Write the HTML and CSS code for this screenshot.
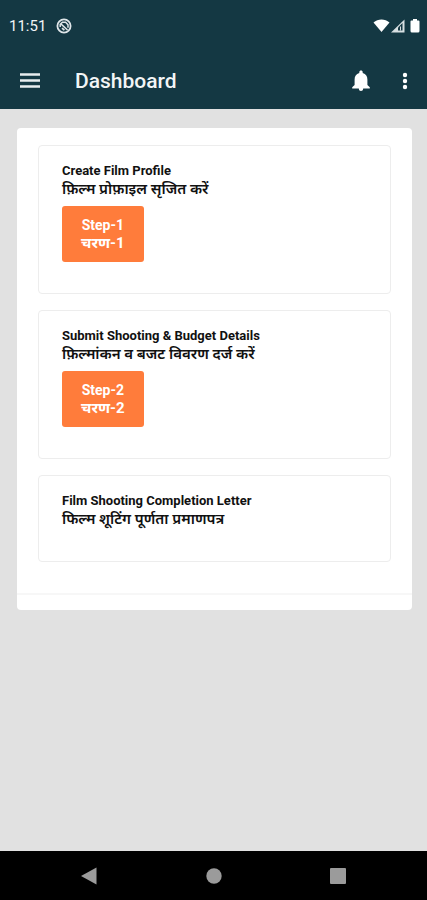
FILE: index.html
```html
<!DOCTYPE html>
<html lang="en">
<head>
<meta charset="utf-8">
<meta name="viewport" content="width=device-width, initial-scale=1">
<title>Dashboard</title>
<link rel="stylesheet" href="styles.css">
</head>
<body>
<header class="top">
  <div class="status">
    <span class="time">11:51</span>
    <svg class="notice" width="16" height="16" viewBox="0 0 16 16" aria-hidden="true">
      <circle cx="8" cy="8" r="6.6" fill="none" stroke="#dfe6e9" stroke-width="1.8"/>
      <path d="M4.2 9V6.4L6.4 4.3H9.6L12 6.8V9.7" fill="none" stroke="#dfe6e9" stroke-width="1.5"/>
      <path d="M5 6l6.5 6M6 10.2l2.4 2" stroke="#dfe6e9" stroke-width="1.7"/>
    </svg>
    <svg class="signals" width="48" height="16" viewBox="0 0 48 16" aria-hidden="true">
      <path d="M.5 4.500C5 .5 12 .5 16.500 4.500L8.500 14z" fill="#fff"/>
      <path d="M18 14.500L31.500 1.500V14.500z" fill="#d7dfe2"/>
      <path d="M25 12.500V9.500L29.500 5V12.500z" fill="#143843"/>
      <path d="M27.500 12.500V8.500" stroke="#d7dfe2" stroke-width="1"/>
      <path d="M40 1h4v1.500h1.500q1 0 1 1V13q0 1.500-1.500 1.500h-6q-1.500 0-1.500-1.500V3.500q0-1 1-1H40z" fill="#fff"/>
    </svg>
  </div>
  <div class="bar">
    <button class="icon" type="button" aria-label="Menu">
      <svg width="20" height="16" viewBox="0 0 20 16"><path d="M0 1.500h20M0 7.500h20M0 13.500h20" stroke="#e8edef" stroke-width="2.400"/></svg>
    </button>
    <h1>Dashboard</h1>
    <button class="icon" type="button" aria-label="Notifications">
      <svg width="18" height="22" viewBox="0 0 18 22"><path d="M9 .5c1 0 1.700.7 1.700 1.700v.7c3.300.8 4.700 3.400 4.700 6.600v5.500l2.400 2.300v1.200H.2v-1.200L2.600 15V9.500c0-3.200 1.400-5.800 4.700-6.600v-.7C7.300 1.200 8 .5 9 .5zM6.800 18.500h4.400C11 20.300 10.200 21 9 21s-2-.7-2.200-2.500z" fill="#fff"/></svg>
    </button>
    <button class="icon" type="button" aria-label="More options">
      <svg width="6" height="20" viewBox="0 0 6 20"><g fill="#fff"><circle cx="3" cy="4" r="2.200"/><circle cx="3" cy="10" r="2.200"/><circle cx="3" cy="16" r="2.200"/></g></svg>
    </button>
  </div>
</header>
<main>
  <div class="panel">
    <div class="cards">
      <section class="card">
        <h2>Create Film Profile</h2>
        <p lang="hi">फ़िल्म प्रोफ़ाइल सृजित करें</p>
        <button class="step" type="button">Step-1<span lang="hi">चरण-1</span></button>
      </section>
      <section class="card">
        <h2>Submit Shooting &amp; Budget Details</h2>
        <p lang="hi">फ़िल्मांकन व बजट विवरण दर्ज करें</p>
        <button class="step" type="button">Step-2<span lang="hi">चरण-2</span></button>
      </section>
      <section class="card">
        <h2>Film Shooting Completion Letter</h2>
        <p lang="hi">फिल्म शूटिंग पूर्णता प्रमाणपत्र</p>
      </section>
    </div>
    <div class="foot"></div>
  </div>
</main>
<nav class="system" aria-label="System">
  <button type="button" aria-label="Back"><svg width="16" height="18" viewBox="0 0 16 18"><path d="M0 9L15.500.5v17z" fill="#9b9b9b"/></svg></button>
  <button type="button" aria-label="Home"><svg width="16" height="16" viewBox="0 0 16 16"><circle cx="8" cy="8" r="7.700" fill="#9b9b9b"/></svg></button>
  <button type="button" aria-label="Recent apps"><svg width="16" height="16" viewBox="0 0 16 16"><rect width="16" height="16" rx="1" fill="#9b9b9b"/></svg></button>
</nav>
</body>
</html>
```
FILE: styles.css
```css
* { box-sizing: border-box; }
body {
  margin: 0;
  min-height: 100vh;
  display: flex;
  flex-direction: column;
  background: #e1e1e1;
  color: #111;
  font-family: Roboto, "Noto Sans", "Noto Sans Devanagari", sans-serif;
}
button {
  border: 0;
  padding: 0;
  background: none;
  font: inherit;
}
svg { display: block; }
.top { background: #143843; color: #f2f5f6; }
.status {
  display: flex;
  align-items: center;
  height: 52px;
  padding: 0 6px 0 9px;
}
.time { font-size: 15px; line-height: 20px; }
.notice { margin-left: 10px; }
.signals { margin-left: auto; }
.bar {
  display: flex;
  align-items: center;
  gap: 32px;
  height: 57px;
  padding: 0 19px 0 20px;
}
.bar h1 {
  flex: 1;
  margin: 0;
  padding-left: 3px;
  font-size: 21px;
  line-height: 28px;
  font-weight: 500;
}
.icon { flex: none; }
main { flex: 1; padding: 19px 15px 24px 17px; }
.panel { background: #fff; border-radius: 4px; }
.cards {
  display: flex;
  flex-direction: column;
  gap: 16px;
  padding: 17px 21px 31px;
}
.card {
  padding: 16px 23px 31px;
  border: 1px solid #ededed;
  border-radius: 4px;
}
.card:last-child { padding-bottom: 33px; }
.card h2 {
  margin: 0;
  font-size: 13px;
  line-height: 18px;
  font-weight: 700;
}
.card p {
  margin: 0;
  font-size: 15px;
  line-height: 18px;
  font-weight: 600;
}
.step {
  display: block;
  margin-top: 8px;
  padding: 10px 19px;
  border-radius: 3px;
  background: #ff7c3b;
  color: #fff;
  font-size: 14px;
  line-height: 18px;
  font-weight: 700;
}
.step span { display: block; font-size: 15px; }
.foot { height: 17px; border-top: 2px solid #f7f7f7; }
.system {
  display: flex;
  justify-content: space-between;
  align-items: center;
  height: 49px;
  padding: 0 19%;
  background: #000;
}
```
